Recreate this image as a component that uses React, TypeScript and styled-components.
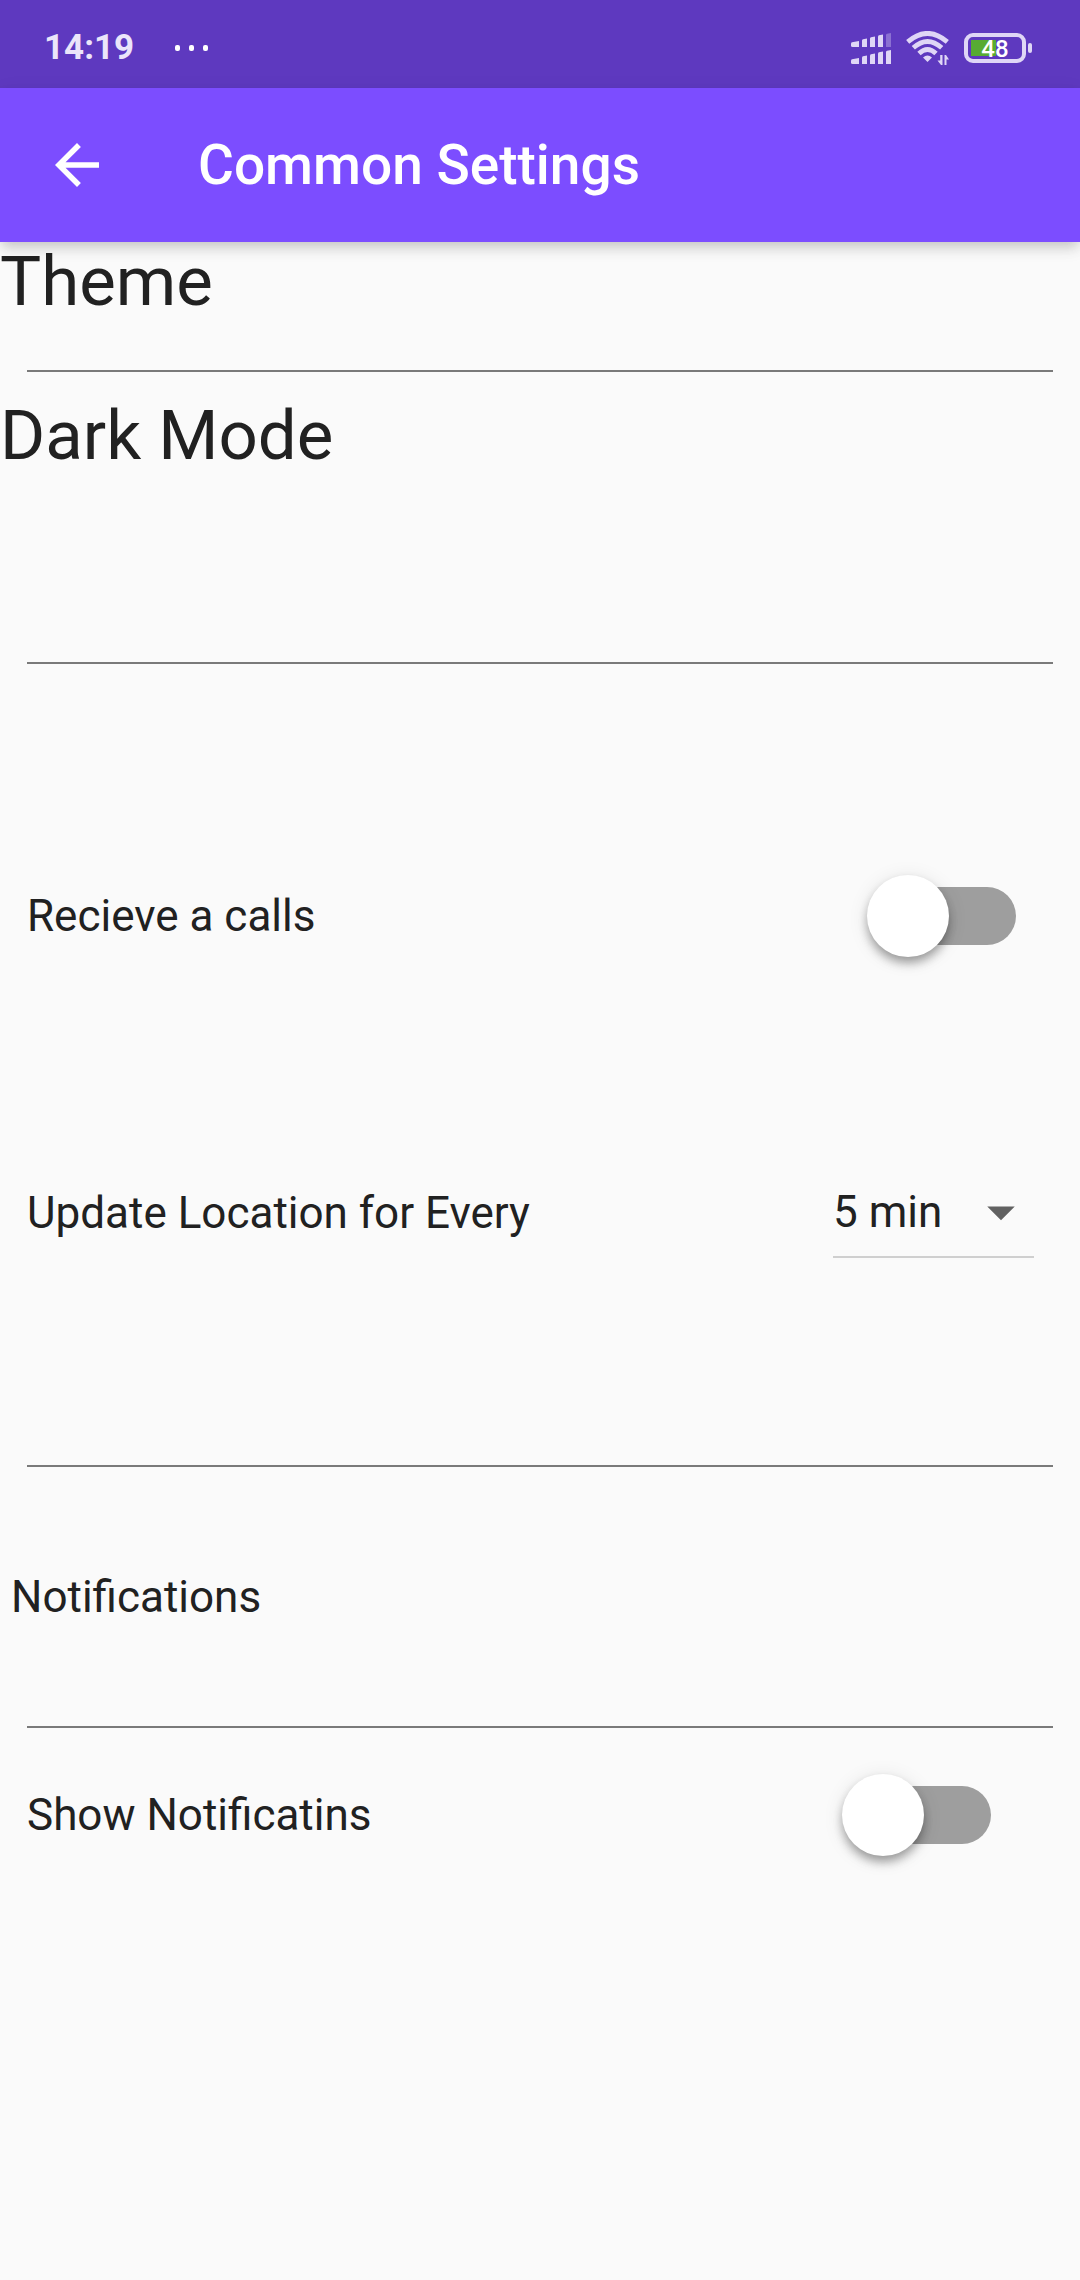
import React, { useState } from "react";
import styled, { createGlobalStyle } from "styled-components";

const GlobalStyle = createGlobalStyle`
  *, *::before, *::after { box-sizing: border-box; }
  body {
    margin: 0;
    background: #fafafa;
    color: #212121;
    font-family: Roboto, "Noto Sans", sans-serif;
  }
`;

const Screen = styled.div`
  display: flex;
  flex-direction: column;
  min-height: 100vh;
  background: #fafafa;
`;

const StatusBar = styled.div`
  display: flex;
  align-items: center;
  justify-content: space-between;
  height: 88px;
  padding: 8px 48px 0 44px;
  background: #5e39bf;
  color: #ebe5fa;
`;

const StatusGroup = styled.div<{ $gap: number }>`
  display: flex;
  align-items: center;
  gap: ${(p) => p.$gap}px;
`;

const Clock = styled.time`
  font-size: 35px;
  line-height: 40px;
  font-weight: 700;
`;

const Battery = styled.div`
  display: grid;
  grid-template-columns: 62px 4px;
  column-gap: 2px;
  align-items: center;
`;

const BatteryShell = styled.div`
  display: grid;
  place-items: center;
  height: 30px;
  border: 4px solid #dfd6f6;
  border-radius: 9px;
  background: linear-gradient(#57ab33, #57ab33) 3px 3px / 25px 16px no-repeat;
  color: #ffffff;
  font-size: 24px;
  line-height: 24px;
  font-weight: 500;
`;

const BatteryTip = styled.span`
  height: 10px;
  border-radius: 2px;
  background: #dfd6f6;
`;

const AppBar = styled.header`
  position: relative;
  display: flex;
  align-items: center;
  height: 154px;
  background: #7c4dff;
  color: #ffffff;
  box-shadow: 0 6px 11px -3px rgba(0, 0, 0, 0.12), 0 8px 14px rgba(0, 0, 0, 0.08),
    0 3px 20px rgba(0, 0, 0, 0.05);
`;

const BackButton = styled.button`
  display: grid;
  place-items: center;
  width: 154px;
  height: 154px;
  padding: 0;
  border: 0;
  background: transparent;
  color: inherit;
`;

const Title = styled.h1`
  margin: 0 0 0 44px;
  font-size: 55px;
  line-height: 66px;
  font-weight: 500;
`;

const Content = styled.main`
  display: flex;
  flex-direction: column;
`;

const Heading = styled.h2`
  margin: 0;
  font-size: 69px;
  line-height: 80px;
  font-weight: 400;
`;

const Subheading = styled.h2`
  margin: 0;
  padding: 104px 11px 103px;
  font-size: 44px;
  line-height: 52px;
  font-weight: 400;
`;

const Divider = styled.hr<{ $before?: number; $after?: number }>`
  align-self: stretch;
  height: 2px;
  margin: ${(p) => p.$before ?? 0}px 27px ${(p) => p.$after ?? 0}px;
  border: 0;
  background: #7a7a7a;
`;

const Row = styled.div<{ $end: number; $before?: number }>`
  display: flex;
  align-items: center;
  justify-content: space-between;
  height: 132px;
  margin-top: ${(p) => p.$before ?? 0}px;
  padding: 0 ${(p) => p.$end}px 0 27px;
`;

const RowLabel = styled.label`
  font-size: 44px;
  line-height: 52px;
`;

const Switch = styled.input`
  appearance: none;
  display: flex;
  align-items: center;
  width: 136px;
  height: 58px;
  margin: 0;
  border-radius: 29px;
  background: #9e9e9e;

  &::before {
    content: "";
    width: 82px;
    height: 82px;
    flex: none;
    margin-left: -13px;
    border-radius: 50%;
    background: #ffffff;
    box-shadow: 0 8px 12px -3px rgba(0, 0, 0, 0.25), 0 5px 10px rgba(0, 0, 0, 0.16),
      0 3px 20px rgba(0, 0, 0, 0.1);
  }

  &:checked {
    background: #b39dfa;
  }

  &:checked::before {
    margin-left: 67px;
    background: #7c4dff;
  }
`;

const SelectBox = styled.div`
  display: grid;
  grid-template-columns: 1fr 66px;
  align-items: center;
  width: 201px;
  height: 90px;
  border-bottom: 2px solid #cfcfcf;
`;

const Select = styled.select`
  grid-area: 1 / 1 / 2 / 3;
  appearance: none;
  width: 100%;
  height: 66px;
  padding: 0;
  border: 0;
  background: transparent;
  color: inherit;
  font: 400 44px/52px Roboto, "Noto Sans", sans-serif;
`;

const Caret = styled.svg`
  grid-area: 1 / 2 / 2 / 3;
  pointer-events: none;
  fill: #616161;
`;

const MoreDots = () => (
  <svg width="36" height="8" viewBox="0 0 36 8" fill="#ffffff" aria-hidden="true">
    <rect x="1" y="1" width="5" height="6" rx="2" />
    <rect x="15" y="1" width="5" height="6" rx="2" />
    <rect x="29" y="1" width="5" height="6" rx="2" />
  </svg>
);

const SignalIcon = () => (
  <svg width="40" height="31" viewBox="0 0 40 31" fill="#dfd6f6" aria-hidden="true">
    <path d="M0 10.500Q0 9.500 1 9.300L8 8V14H1.500Q0 14 0 12.500Z" />
    <path d="M11 7.500Q11 6.500 12 6.300L16 5.500V14H11Z" />
    <path d="M19 5.500Q19 4.500 20 4.300L24 3.500V14H19Z" />
    <path d="M27 3.500Q27 2.500 28 2.300L32 1.500V14H27Z" />
    <path d="M35 2Q35 1 36 .8L40 0V14H35Z" opacity=".35" />
    <path d="M0 27.500Q0 26.500 1 26.300L8 25V31H1.500Q0 31 0 29.500Z" />
    <path d="M11 24.500Q11 23.500 12 23.300L16 22.500V31H11Z" />
    <path d="M19 22.500Q19 21.500 20 21.300L24 20.500V31H19Z" />
    <path d="M27 20.500Q27 19.500 28 19.300L32 18.500V31H27Z" />
    <path d="M35 19Q35 18 36 17.800L40 17V31H35Z" />
  </svg>
);

const WifiIcon = () => (
  <svg width="43" height="34" viewBox="0 0 43 34" fill="none" aria-hidden="true">
    <g stroke="#dfd6f6" strokeWidth="4.800">
      <path d="M1.700 10.800Q21.500-6 41.300 10.800" />
      <path d="M7.300 16.800Q21.500 4 35.700 16.800" />
      <path d="M13 22.500Q21.500 14.500 30 22.500" />
    </g>
    <path d="M17 26.500Q21.500 22.500 26 26.500L21.500 31Z" fill="#dfd6f6" />
    <path d="M36.500 24V34H35L31.500 29.500H34.200V24ZM38.500 34V24H40L43 28.500H40.500V34Z" fill="#dfd6f6" />
  </svg>
);

const BackIcon = () => (
  <svg width="66" height="66" viewBox="0 0 24 24" fill="currentColor" aria-hidden="true">
    <path d="M20 11H7.830l5.590-5.590L12 4l-8 8 8 8 1.410-1.410L7.830 13H20v-2z" />
  </svg>
);

export default function App() {
  const [calls, setCalls] = useState(false);
  const [notify, setNotify] = useState(false);
  const [minutes, setMinutes] = useState("5");

  return (
    <Screen>
      <GlobalStyle />
      <StatusBar>
        <StatusGroup $gap={40}>
          <Clock>14:19</Clock>
          <MoreDots />
        </StatusGroup>
        <StatusGroup $gap={15}>
          <SignalIcon />
          <WifiIcon />
          <Battery>
            <BatteryShell>48</BatteryShell>
            <BatteryTip />
          </Battery>
        </StatusGroup>
      </StatusBar>
      <AppBar>
        <BackButton type="button" aria-label="Back">
          <BackIcon />
        </BackButton>
        <Title>Common Settings</Title>
      </AppBar>
      <Content>
        <Heading>Theme</Heading>
        <Divider $before={48} $after={24} />
        <Heading>Dark Mode</Heading>
        <Divider $before={186} />
        <Row $before={186} $end={64}>
          <RowLabel htmlFor="calls">Recieve a calls</RowLabel>
          <Switch
            id="calls"
            type="checkbox"
            role="switch"
            checked={calls}
            onChange={(e) => setCalls(e.target.checked)}
          />
        </Row>
        <Row $before={165} $end={46}>
          <RowLabel htmlFor="minutes">Update Location for Every</RowLabel>
          <SelectBox>
            <Select id="minutes" value={minutes} onChange={(e) => setMinutes(e.target.value)}>
              <option value="5">5 min</option>
              <option value="10">10 min</option>
              <option value="15">15 min</option>
            </Select>
            <Caret width="66" height="66" viewBox="0 0 24 24" aria-hidden="true">
              <path d="M7 10l5 5 5-5z" />
            </Caret>
          </SelectBox>
        </Row>
        <Divider $before={186} />
        <Subheading>Notifications</Subheading>
        <Divider />
        <Row $before={21} $end={89}>
          <RowLabel htmlFor="notify">Show Notificatins</RowLabel>
          <Switch
            id="notify"
            type="checkbox"
            role="switch"
            checked={notify}
            onChange={(e) => setNotify(e.target.checked)}
          />
        </Row>
      </Content>
    </Screen>
  );
}
